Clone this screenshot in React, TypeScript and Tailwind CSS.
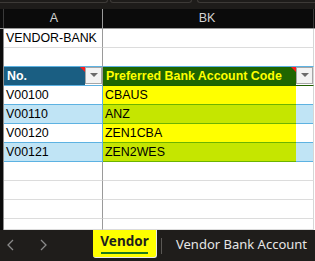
const rows = [
  { no: "V00100", code: "CBAUS" },
  { no: "V00110", code: "ANZ" },
  { no: "V00120", code: "ZEN1CBA" },
  { no: "V00121", code: "ZEN2WES" },
]

function RowHead() {
  return <div className="w-[4px] shrink-0 border-r border-[#8c8c8c] bg-[#0b0b0b]" />
}

function EmptyRow({ h = "h-[19px]", children }: { h?: string; children?: React.ReactNode }) {
  return (
    <div className={`flex ${h}`}>
      <RowHead />
      <div className="flex w-[99px] shrink-0 items-center border-r border-b border-r-[#9a9a9a] border-b-[#dcdcdc] pl-[2px]">
        {children}
      </div>
      <div className="flex-1 border-r border-b border-r-[#d6d6d6] border-b-[#dcdcdc]" />
      <div className="w-px bg-white" />
    </div>
  )
}

function Caret() {
  return (
    <div className="flex h-[17px] w-[17px] items-center justify-center border border-[#a6a6a6] bg-[#f3f3f3]">
      <svg width="8" height="5" viewBox="0 0 8 5">
        <path d="M0 0 L8 0 L4 4 Z" fill="#6b6b6b" />
      </svg>
    </div>
  )
}

export default function App() {
  return (
    <div className="flex h-[261px] w-[315px] flex-col overflow-hidden bg-white font-['Liberation_Sans',Arial,sans-serif] text-[12.4px] text-black">
      {/* formula bar remnant */}
      <div className="relative h-[9px] shrink-0 bg-[#1e1c1a]">
        <div className="absolute left-0 top-0 h-[3px] w-[108px] rounded-br-[3px] border-b border-r border-[#3d3a37]" />
        <div className="absolute left-[110px] top-0 h-[3px] w-[82px] rounded-b-[3px] border-b border-x border-[#3d3a37]" />
        <div className="absolute left-[197px] top-0 h-[3px] w-[118px] rounded-bl-[3px] border-b border-l border-[#3d3a37]" />
      </div>

      {/* column headers */}
      <div className="flex h-[20px] shrink-0 border-b border-[#9a9a9a] bg-[#0b0b0b] text-[12.5px] text-[#d2d2d2]">
        <div className="w-[4px] shrink-0 border-r border-[#3a3a3a]" />
        <div className="flex w-[99px] shrink-0 items-center justify-center border-r border-[#9a9a9a] pl-[2px]">A</div>
        <div className="flex flex-1 items-center justify-center border-r border-[#3a3a3a] pr-[2px]">BK</div>
        <div className="w-px" />
      </div>

      <EmptyRow>VENDOR-BANK</EmptyRow>

      {/* row 2 */}
      <div className="flex h-[19px]">
        <RowHead />
        <div className="w-[99px] shrink-0 border-r border-b border-r-[#9a9a9a] border-b-[#5db2e2]" />
        <div className="flex-1 border-r border-b border-r-[#d6d6d6] border-b-[#5db2e2]" />
        <div className="w-px bg-white" />
      </div>

      {/* table header */}
      <div className="flex h-[19px] font-bold">
        <RowHead />
        <div className="flex w-[99px] shrink-0 border-r border-b border-r-[#9a9a9a] border-b-[#5db2e2]">
          <div className="relative flex flex-1 items-center bg-[#1a5e82] pl-[3px] text-white">
            No.
            <div className="absolute right-0 top-0 h-0 w-0 border-l-[5px] border-t-[5px] border-l-transparent border-t-[#ff1a1a]" />
          </div>
          <Caret />
        </div>
        <div className="flex flex-1 border-r border-b border-r-[#d6d6d6] border-b-[#1f5f00]">
          <div className="relative flex flex-1 items-center bg-[#1f6600] pl-[3px] text-[#ffff00]">
            Preferred Bank Account Code
            <div className="absolute right-0 top-0 h-0 w-0 border-l-[5px] border-t-[5px] border-l-transparent border-t-[#ff1a1a]" />
          </div>
          <Caret />
        </div>
        <div className="w-px bg-white" />
      </div>

      {rows.map((r, i) => {
        const band = i % 2 === 1
        return (
          <div key={r.no} className="flex h-[19px]">
            <RowHead />
            <div
              className={`flex w-[99px] shrink-0 items-center border-r border-b border-[#5db2e2] pl-[2px] ${
                band ? "bg-[#c0e4f5]" : "bg-white"
              }`}
            >
              {r.no}
            </div>
            <div className="flex flex-1 border-r border-r-[#d6d6d6]">
              <div
                className={`flex flex-1 items-center border-b border-[#6cb400] pl-[2px] ${
                  band ? "bg-[#c5e600]" : "bg-[#ffff00]"
                }`}
              >
                {r.code}
              </div>
              <div className={`w-[17px] border-b border-[#5db2e2] ${band ? "bg-[#c0e4f5]" : "bg-white"}`} />
            </div>
            <div className="w-px bg-white" />
          </div>
        )
      })}

      <EmptyRow />
      <EmptyRow />
      <EmptyRow />
      <EmptyRow h="h-[11px]" />

      {/* sheet tabs */}
      <div className="flex flex-1 items-start bg-[#1f1d1b] font-['Noto_Sans',sans-serif]">
        <div className="flex h-[30px] w-[93px] shrink-0 items-center gap-[22px] pl-[6px] text-[#8a8a8a]">
          <svg width="10" height="12" viewBox="0 0 10 12">
            <path d="M7 1 L2 6 L7 11" fill="none" stroke="#8a8a8a" strokeWidth="1.3" />
          </svg>
          <svg width="10" height="12" viewBox="0 0 10 12">
            <path d="M3 1 L8 6 L3 11" fill="none" stroke="#8a8a8a" strokeWidth="1.3" />
          </svg>
        </div>
        <div className="flex h-[28px] w-[64px] shrink-0 flex-col items-center justify-center rounded-b-[3px] border-b border-r border-[#e8e8e8] bg-[#ffff00] text-[13.5px] font-bold leading-none text-[#1e1e1e]">
          <span className="mt-[2px]">Vendor</span>
          <div className="mt-[4px] h-[2px] w-[47px] bg-[#1d7a1d]" />
        </div>
        <div className="ml-[4px] mt-[8px] h-[16px] w-px shrink-0 bg-[#5a5855]" />
        <div className="flex h-[30px] items-center pl-[14px] text-[13px] whitespace-nowrap text-[#e6e6e6]">
          Vendor Bank Account
        </div>
      </div>
    </div>
  )
}
